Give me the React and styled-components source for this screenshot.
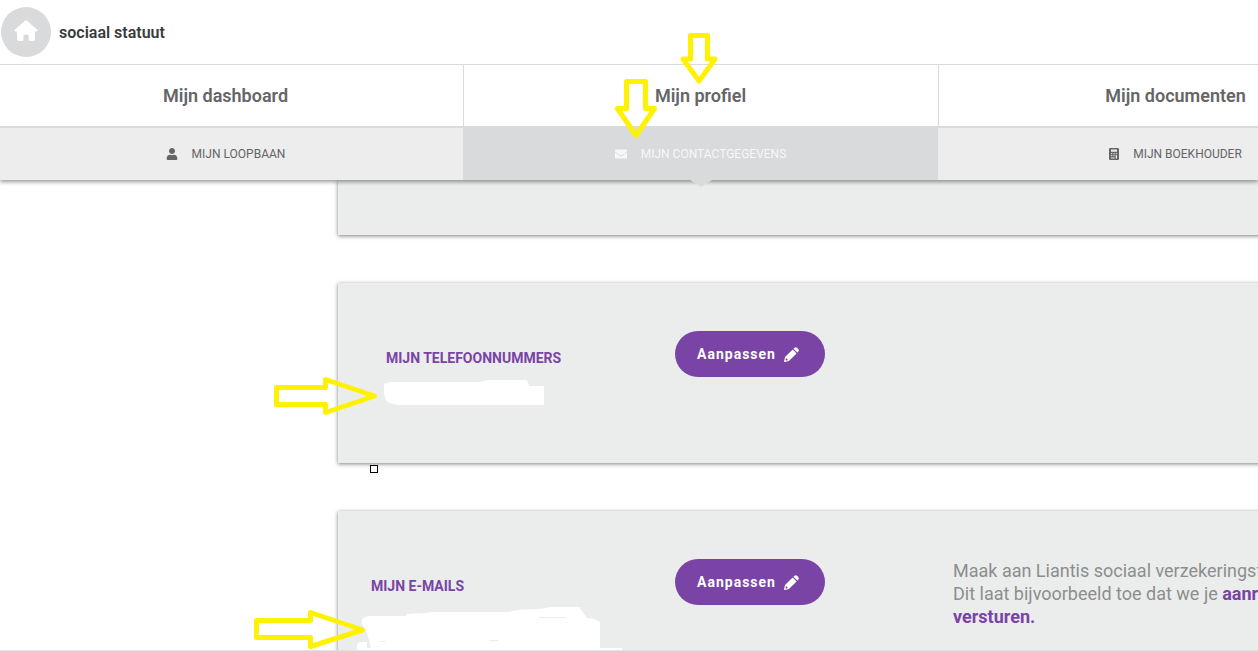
import React from "react";
import styled, { createGlobalStyle, css } from "styled-components";
import { FaUser, FaEnvelope } from "react-icons/fa";

const Global = createGlobalStyle`
  *, *::before, *::after { box-sizing: border-box; }
  body { margin: 0; background: #fff; font-family: Roboto, "Liberation Sans", sans-serif; color: #646567; }
  a { color: inherit; text-decoration: none; }
  h1, h2, p, ul { margin: 0; padding: 0; }
`;

const Shell = styled.div`
  position: relative;
  display: flex;
  flex-direction: column;
  height: 100vh;
  overflow: hidden;
  border-bottom: 1px solid #e2e2e2;
`;

const Header = styled.header`
  position: relative;
  z-index: 1;
  flex: none;
  background: #fff;
  box-shadow: 0 2px 4px rgba(0, 0, 0, 0.4);
`;

const TopBar = styled.div`
  display: flex;
  align-items: center;
  gap: 8px;
  height: 65px;
  padding-left: 1px;
  border-bottom: 1px solid #d9dadc;
`;

const HomeLink = styled.a`
  display: grid;
  place-items: center;
  width: 50px;
  height: 50px;
  border-radius: 50%;
  background: #d9dadc;
`;

const SiteTitle = styled.h1`
  padding-top: 2px;
  font-size: 16px;
  line-height: 20px;
  font-weight: 600;
  color: #3a3a3c;
`;

const NavGrid = styled.ul`
  display: grid;
  grid-template-columns: repeat(3, 1fr);
  width: calc(100% + 167px);
  margin-left: -12px;
  list-style: none;
`;

const MainTab = styled.a`
  display: flex;
  align-items: center;
  justify-content: center;
  height: 61px;
  box-shadow: inset 1px 0 #d9dadc;
  font-size: 18px;
  font-weight: 600;
`;

const SubTab = styled.a`
  position: relative;
  display: flex;
  align-items: center;
  justify-content: center;
  gap: 14px;
  height: 54px;
  border-top: 2px solid #d9dadc;
  background: #ededed;
  font-size: 12px;
  text-transform: uppercase;
  svg { flex: none; }
  ${(p) => p.$active && css`
    background: #d9dadc;
    color: #f7f7f7;
    &::after {
      content: "";
      position: absolute;
      top: 100%;
      left: 50%;
      margin-left: -11px;
      border: 11px solid transparent;
      border-top: 7px solid #d9dadc;
      border-bottom: 0;
    }
  `}
`;

const Main = styled.main`
  flex: 1;
  min-height: 0;
  overflow: hidden;
  display: flex;
  flex-direction: column;
  gap: 48px;
  padding-left: 338px;
`;

const Card = styled.section`
  flex: none;
  display: grid;
  grid-template-columns: 289px 278px 1fr;
  align-items: start;
  width: calc(100% + 60px);
  min-height: ${(p) => (p.$short ? "55px" : "180px")};
  padding: ${(p) => (p.$short ? "0" : "48px 48px 0")};
  padding-left: ${(p) => (p.$narrow ? "33px" : "48px")};
  ${(p) => p.$narrow && "grid-template-columns: 304px 278px 1fr;"}
  background: #ebedec;
  box-shadow: 0 1px 4px rgba(0, 0, 0, 0.5);
`;

const CardTitle = styled.h2`
  padding-top: 18px;
  font-size: 14px;
  line-height: 18px;
  font-weight: 700;
  text-transform: uppercase;
  color: #7a43a6;
`;

const EditButton = styled.button`
  display: flex;
  align-items: center;
  justify-content: center;
  gap: 8px;
  width: 150px;
  height: 46px;
  padding: 0 4px 0 0;
  border: 0;
  border-radius: 23px;
  background: #7a43a6;
  color: #fff;
  font: 700 14px/18px Roboto, "Liberation Sans", sans-serif;
  letter-spacing: 1px;
`;

const Note = styled.p`
  font-size: 18px;
  line-height: 23px;
  white-space: nowrap;
  color: #8c8d8f;
  strong { color: #7a43a6; font-weight: 700; }
`;

const Marks = styled.svg`
  position: absolute;
  top: 0;
  left: 0;
  z-index: 2;
  pointer-events: none;
`;

const HomeIcon = () => (
  <svg width="24" height="24" viewBox="0 0 24 24" fill="#fff" aria-hidden="true">
    <path d="M11.2.6a1.2 1.2 0 0 1 1.6 0l10.4 9.2c.8.8.4 1.7-.6 1.7H21v7.6c0 1.2-.8 2-2 2h-3c-.8 0-1.4-.6-1.4-1.4V15.5a.8.8 0 0 0-.8-.8h-3.600a.8.8 0 0 0-.8.8v4.200c0 .8-.6 1.400-1.400 1.400H5c-1.200 0-2-.8-2-2v-7.600H1.400c-1 0-1.400-.9-.6-1.700z" />
  </svg>
);

const CalculatorIcon = () => (
  <svg width="10" height="12" viewBox="0 0 10 12" fill="currentColor" aria-hidden="true">
    <path
      fillRule="evenodd"
      d="M1.200 0h7.600Q10 0 10 1.200v9.600Q10 12 8.800 12H1.200Q0 12 0 10.800V1.200Q0 0 1.200 0zM2 1.500v2.200h6V1.500zM2 5.200v1.100h1.300V5.200zM4.300 5.200v1.100h1.300V5.200zM6.700 5.200v1.100H8V5.200zM2 7.200v1.100h1.300V7.200zM4.300 7.200v1.100h1.300V7.200zM6.700 7.200v3.300H8V7.200zM2 9.400v1.100h3.600V9.400z"
    />
  </svg>
);

const PencilIcon = () => (
  <svg width="15" height="15" viewBox="0 0 15 15" fill="currentColor" aria-hidden="true">
    <path d="M10.300.9Q11.700-.4 13.100.8l1.100 1.100q1.300 1.400 0 2.800l-.9.9L9.400 1.800z" />
    <path fillRule="evenodd" d="M8.700 2.500l3.900 3.900-7.700 7.500-4.100 1Q0 15 .1 14.200l.9-4.100zM1.900 11.200l-.4 1.900.5.500 1.700-.4v-1h-1v-1z" />
  </svg>
);

const tabs = [
  { main: "Mijn dashboard", sub: "Mijn loopbaan", icon: <FaUser size={12} /> },
  { main: "Mijn profiel", sub: "Mijn contactgegevens", icon: <FaEnvelope size={12} />, active: true },
  { main: "Mijn documenten", sub: "Mijn boekhouder", icon: <CalculatorIcon /> },
];

const Edit = () => (
  <EditButton type="button">
    Aanpassen
    <PencilIcon />
  </EditButton>
);

const arrows = [
  "690.5,35.5 707.5,35.5 707.5,59 715,59 699,81 683,59 690.5,59",
  "626.5,81.5 645.5,81.5 645.5,108.5 654.5,108.5 636,135.5 617.5,108.5 626.5,108.5",
  "276.5,387.5 325.5,387.5 325.5,379.5 374.5,396 325.5,412.5 325.5,404.5 276.5,404.5",
  "256.5,620.5 310.5,620.5 310.5,612.5 362.5,630 310.5,646.5 310.5,637.5 256.5,637.5",
];

export default function App() {
  return (
    <Shell>
      <Global />
      <Header>
        <TopBar>
          <HomeLink href="#" aria-label="Home"><HomeIcon /></HomeLink>
          <SiteTitle>sociaal statuut</SiteTitle>
        </TopBar>
        <nav>
          <NavGrid>
            {tabs.map((t) => (
              <li key={t.main}>
                <MainTab href="#">{t.main}</MainTab>
                <SubTab href="#" $active={t.active}>{t.icon}{t.sub}</SubTab>
              </li>
            ))}
          </NavGrid>
        </nav>
      </Header>
      <Main>
        <Card $short />
        <Card>
          <CardTitle>Mijn telefoonnummers</CardTitle>
          <Edit />
        </Card>
        <Card $narrow>
          <CardTitle>Mijn e-mails</CardTitle>
          <Edit />
          <Note>
            Maak aan Liantis sociaal verzekeringsf<br />
            Dit laat bijvoorbeeld toe dat we je <strong>aanr<br />versturen.</strong>
          </Note>
        </Card>
      </Main>
      <Marks width="1258" height="651" viewBox="0 0 1258 651" aria-hidden="true">
        <path fill="#fff" d="M384 384l6-2h90l7-2h40l2 6h15v19H398l-8-2-4-2-2-7z" />
        <path fill="#fff" d="M362 619l6-3h38l1-2 18-1 7-1h77l8-2 23-1 10-2h29l8 11 7 1 6 3v26h22v3H357v-7l3-2h7v6h4l-2-8-3-10-4-6z" />
        <path stroke="#ebedec" d="M539 617.5h27M489 640.5h9M380 641.5h5" />
        <path stroke="#6b6b6b" d="M744 650.5h6" />
        <g fill="none" stroke="#fff200" strokeWidth="5" strokeLinejoin="round">
          {arrows.map((points) => <polygon key={points} points={points} />)}
        </g>
        <rect x="370.5" y="465.5" width="7" height="7" fill="#fff" stroke="#000" shapeRendering="crispEdges" />
      </Marks>
    </Shell>
  );
}
